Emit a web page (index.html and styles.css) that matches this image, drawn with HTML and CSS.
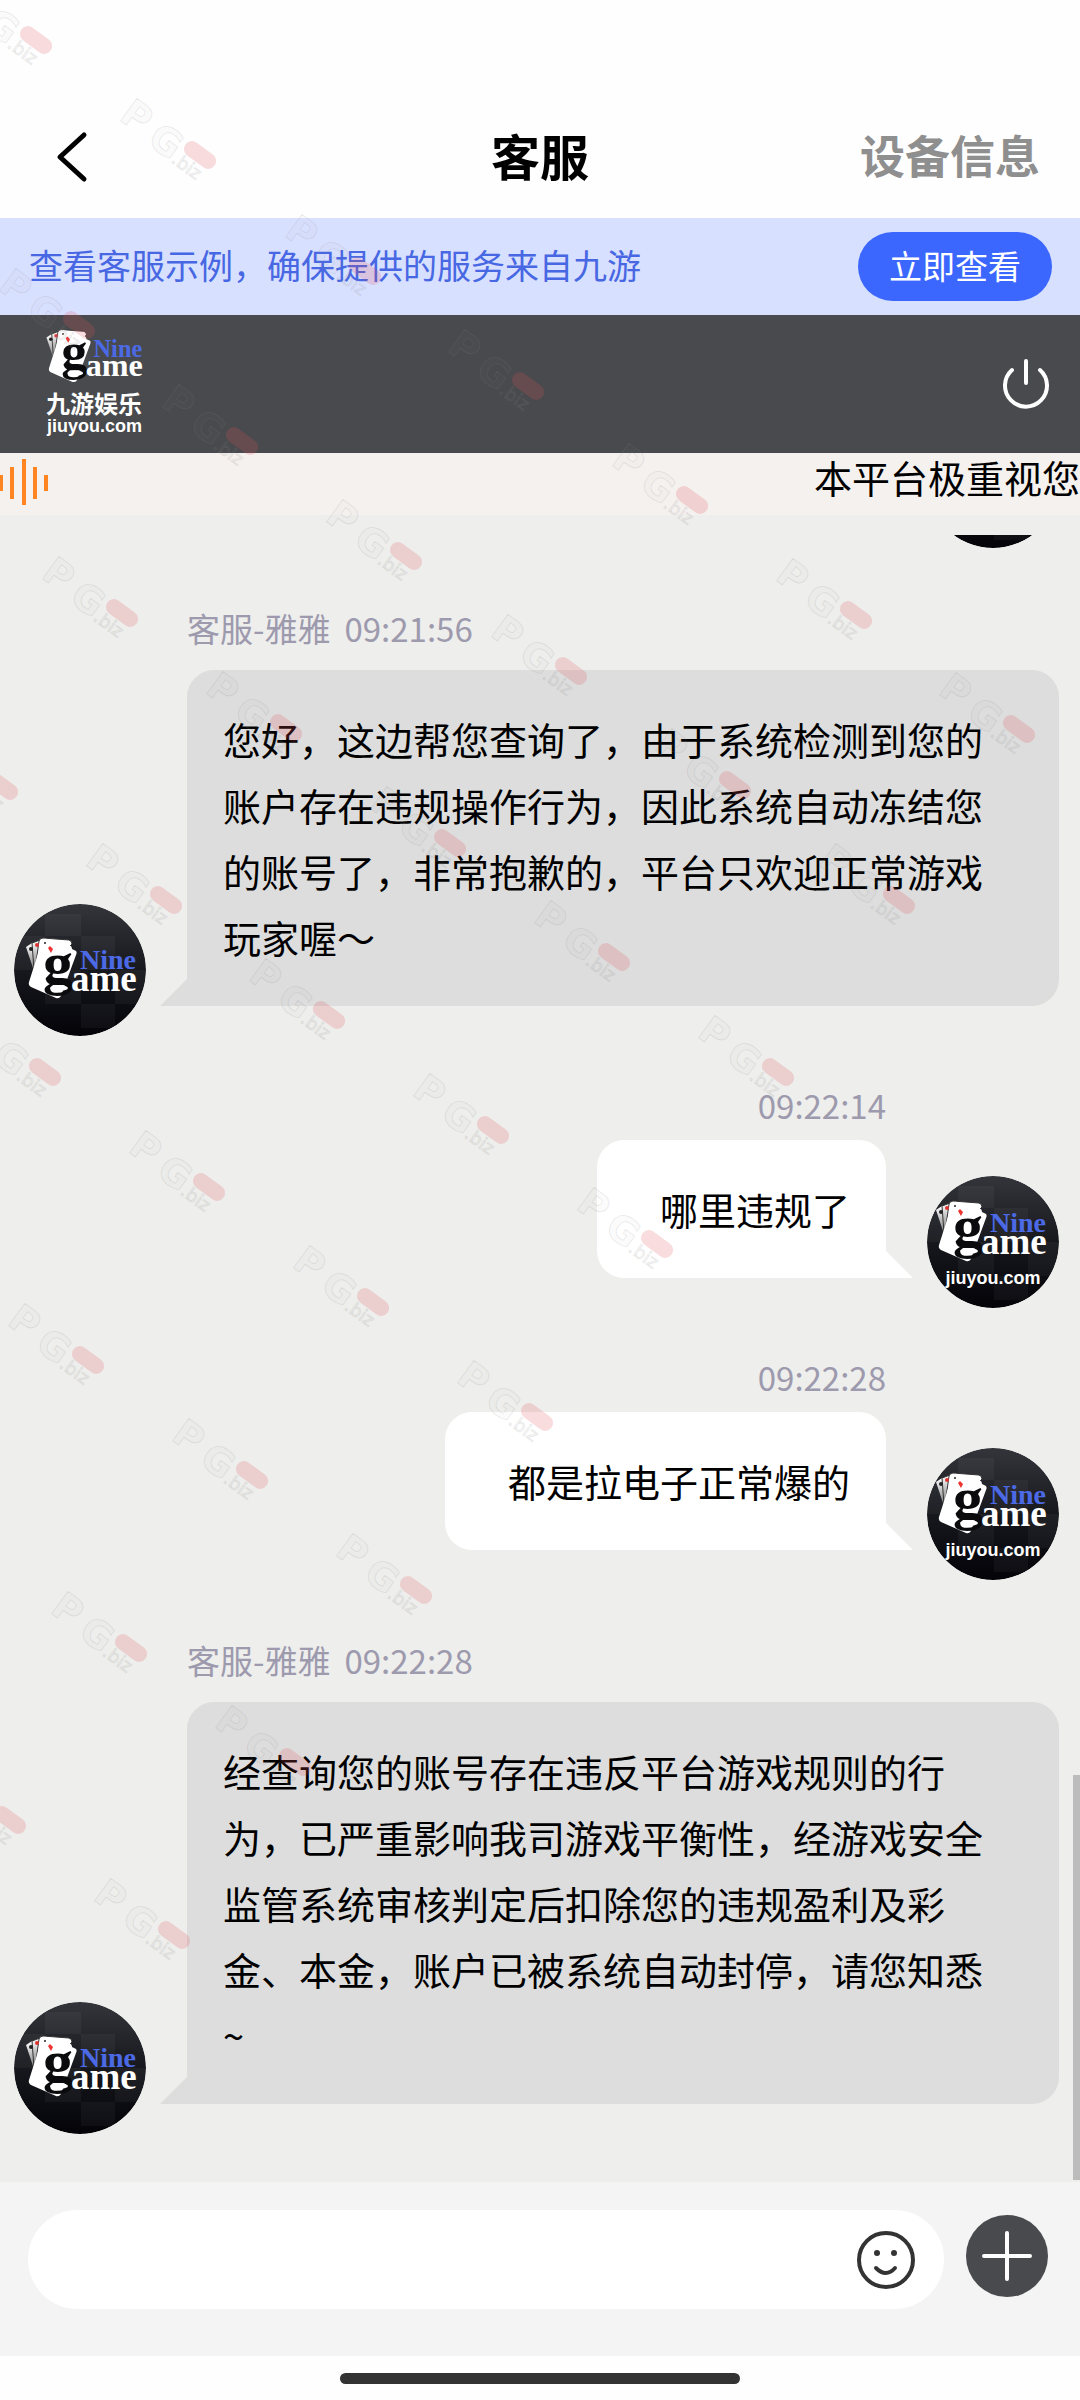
FILE: index.html
```html
<!DOCTYPE html>
<html lang="zh-CN">

<head>
    <meta charset="UTF-8">
    <meta name="viewport" content="width=device-width, initial-scale=1.0">
    <title>客服</title>
    <link rel="stylesheet" href="styles.css">
</head>

<body>
    <!-- Shared shapes -->
    <svg class="defs" width="0" height="0" aria-hidden="true">
        <defs>
            <linearGradient id="avatar-bg" x1="0" y1="0" x2="0" y2="1">
                <stop offset="0" stop-color="#34353b" />
                <stop offset="0.5" stop-color="#17181d" />
                <stop offset="1" stop-color="#030308" />
            </linearGradient>
            <linearGradient id="card-shade" x1="0" y1="0" x2="0" y2="1">
                <stop offset="0" stop-color="#fff" />
                <stop offset="1" stop-color="#777" />
            </linearGradient>
            <symbol id="brand" viewBox="0 0 132 132" overflow="visible">
                <path d="M12 43l6-4 6 22-4 6z" fill="url(#card-shade)" />
                <path d="M18 39l8-3 2 16-8 14z" fill="url(#card-shade)" stroke="#333" stroke-width="1" />
                <path d="M25 37q1-3 4-3l26 2q3 1 3 4l-28 28-9-2z" fill="#fff" stroke="#333" stroke-width="1" />
                <path d="M28 37q1-3 5-2l22 6q3 1 3 4l2 1q4 1 2 5L47 92q-2 3-5 2L17 83q-3-2-2-5z" fill="#fff" />
                <circle cx="17" cy="45" r="2" fill="#222" />
                <circle cx="23" cy="41" r="2" fill="#d33" />
                <circle cx="31" cy="39" r="1" fill="#222" />
                <path d="M34 44l2-2 3 3-2 4z" fill="#e33" />
                <text class="brand-g" x="29" y="79">g</text>
                <ellipse cx="45" cy="84" rx="9" ry="3" fill="#fff" />
                <text class="brand-nine" x="66" y="65">Nine</text>
                <text class="brand-ame" x="57" y="87">ame</text>
            </symbol>
            <symbol id="avatar-base" viewBox="0 0 132 132">
                <circle cx="66" cy="66" r="66" fill="url(#avatar-bg)" />
                <path d="M31 10h36v22H31zM67 32h34v34H67zM0 66h31V32H0zM31 66h36v34H31zM101 66h31v34h-31zM67 100h34v24H67z" fill="#fff" opacity="0.04" />
            </symbol>
            <symbol id="mark" overflow="visible">
                <g transform="rotate(36)">
                    <text class="mark-name" x="-88" y="19">P</text>
                    <text class="mark-name" x="-51" y="22">G</text>
                    <text class="mark-tld" x="-20" y="23">.biz</text>
                    <rect x="-18" y="-8" width="36" height="16" rx="8" fill="#e2505a" opacity="0.2" />
                </g>
            </symbol>
        </defs>
    </svg>

    <div class="app">
        <!-- Title bar -->
        <header class="title-bar">
            <button class="back" type="button" aria-label="返回">
                <svg width="34" height="54" viewBox="0 0 34 54">
                    <path d="M29 5L5 27l24 22" />
                </svg>
            </button>
            <h1>客服</h1>
            <a class="device-link" href="#">设备信息</a>
        </header>

        <!-- Notice -->
        <div class="notice">
            <p>查看客服示例，确保提供的服务来自九游</p>
            <button class="notice-button" type="button">立即查看</button>
        </div>

        <!-- Brand bar -->
        <div class="brand-bar">
            <svg class="logo" width="100" height="112" viewBox="0 0 100 112" role="img" aria-label="九游娱乐">
                <use href="#brand" x="-10" y="-28" width="115" height="115" />
                <text class="logo-name" x="0" y="85">九游娱乐</text>
                <text class="logo-site" x="1" y="104">jiuyou.com</text>
            </svg>
            <button class="power" type="button" aria-label="退出">
                <svg width="50" height="54" viewBox="0 0 50 54">
                    <path d="M11 13a21 21 0 1 0 28 0M25 4v22" />
                </svg>
            </button>
        </div>

        <!-- Announcement -->
        <div class="announce">
            <svg width="50" height="50" viewBox="0 0 50 50" aria-hidden="true">
                <path d="M1 18v16M12 10v32M24 2v46M35 10v32M46 18v16" />
            </svg>
            <div class="announce-text">本平台极重视您</div>
        </div>

        <!-- Messages -->
        <div class="chat-wrap">
            <main class="chat">
                <div class="message user">
                    <svg class="avatar" viewBox="0 0 132 132">
                        <use href="#avatar-base" />
                    </svg>
                </div>

                <div class="message staff">
                    <svg class="avatar" viewBox="0 0 132 132">
                        <use href="#avatar-base" />
                        <use href="#brand" width="132" height="132" />
                    </svg>
                    <div class="content">
                        <div class="meta"><span>客服-雅雅</span><time>09:21:56</time></div>
                        <div class="bubble">您好，这边帮您查询了，由于系统检测到您的账户存在违规操作行为，因此系统自动冻结您的账号了，非常抱歉的，平台只欢迎正常游戏玩家喔～</div>
                    </div>
                </div>

                <div class="message user">
                    <div class="content">
                        <div class="meta"><time>09:22:14</time></div>
                        <div class="bubble">哪里违规了</div>
                    </div>
                    <svg class="avatar" viewBox="0 0 132 132">
                        <use href="#avatar-base" />
                        <use href="#brand" x="-3" y="-9" width="132" height="132" />
                        <text class="avatar-site" x="66" y="108">jiuyou.com</text>
                    </svg>
                </div>

                <div class="message user">
                    <div class="content">
                        <div class="meta"><time>09:22:28</time></div>
                        <div class="bubble">都是拉电子正常爆的</div>
                    </div>
                    <svg class="avatar" viewBox="0 0 132 132">
                        <use href="#avatar-base" />
                        <use href="#brand" x="-3" y="-9" width="132" height="132" />
                        <text class="avatar-site" x="66" y="108">jiuyou.com</text>
                    </svg>
                </div>

                <div class="message staff">
                    <svg class="avatar" viewBox="0 0 132 132">
                        <use href="#avatar-base" />
                        <use href="#brand" width="132" height="132" />
                    </svg>
                    <div class="content">
                        <div class="meta"><span>客服-雅雅</span><time>09:22:28</time></div>
                        <div class="bubble">经查询您的账号存在违反平台游戏规则的行为，已严重影响我司游戏平衡性，经游戏安全监管系统审核判定后扣除您的违规盈利及彩金、本金，账户已被系统自动封停，请您知悉~</div>
                    </div>
                </div>
            </main>
            <div class="scroll-thumb"></div>
        </div>

        <!-- Composer -->
        <form class="composer">
            <div class="field">
                <input type="text" aria-label="输入消息">
                <button class="emoji" type="button" aria-label="表情">
                    <svg width="58" height="58" viewBox="0 0 58 58">
                        <circle class="line" cx="29" cy="29" r="27" />
                        <circle cx="20" cy="22" r="3" />
                        <circle cx="37" cy="22" r="3" />
                        <path class="line" d="M19 37q10 10 19 0" />
                    </svg>
                </button>
            </div>
            <button class="add" type="button" aria-label="更多">
                <svg width="54" height="54" viewBox="0 0 54 54">
                    <path d="M27 4v46M4 27h46" />
                </svg>
            </button>
        </form>

        <div class="home-area">
            <div class="home-bar"></div>
        </div>

        <!-- Watermark -->
        <svg class="watermark" aria-hidden="true">
            <use href="#mark" x="36" y="40" />
            <use href="#mark" x="200" y="155" />
            <use href="#mark" x="365" y="271" />
            <use href="#mark" x="528" y="386" />
            <use href="#mark" x="692" y="500" />
            <use href="#mark" x="856" y="615" />
            <use href="#mark" x="1019" y="729" />
            <use href="#mark" x="79" y="325" />
            <use href="#mark" x="242" y="441" />
            <use href="#mark" x="406" y="556" />
            <use href="#mark" x="571" y="671" />
            <use href="#mark" x="735" y="785" />
            <use href="#mark" x="899" y="900" />
            <use href="#mark" x="122" y="613" />
            <use href="#mark" x="286" y="728" />
            <use href="#mark" x="450" y="843" />
            <use href="#mark" x="614" y="957" />
            <use href="#mark" x="778" y="1072" />
            <use href="#mark" x="2" y="786" />
            <use href="#mark" x="166" y="900" />
            <use href="#mark" x="329" y="1015" />
            <use href="#mark" x="493" y="1130" />
            <use href="#mark" x="657" y="1244" />
            <use href="#mark" x="45" y="1072" />
            <use href="#mark" x="209" y="1187" />
            <use href="#mark" x="373" y="1302" />
            <use href="#mark" x="537" y="1417" />
            <use href="#mark" x="88" y="1360" />
            <use href="#mark" x="252" y="1475" />
            <use href="#mark" x="416" y="1590" />
            <use href="#mark" x="131" y="1648" />
            <use href="#mark" x="295" y="1762" />
            <use href="#mark" x="10" y="1820" />
            <use href="#mark" x="174" y="1935" />
        </svg>
    </div>
</body>

</html>
```
FILE: styles.css
```css
* {
    box-sizing: border-box;
}

body {
    margin: 0;
    background-color: #fefefe;
    color: #000;
    font-family: "Noto Sans CJK SC", sans-serif;
}

button {
    border: none;
    padding: 0;
    background: none;
    font-family: inherit;
    cursor: pointer;
}

svg {
    display: block;
}

.defs {
    position: absolute;
}

.app {
    position: relative;
    display: flex;
    flex-direction: column;
    height: 100vh;
    overflow: hidden;
}

/* Title bar */
.title-bar {
    display: grid;
    grid-template-columns: 1fr auto 1fr;
    align-items: center;
    height: 218px;
    padding: 92px 40px 0;
    flex-shrink: 0;
}

.title-bar h1 {
    margin: 0;
    font-size: 49px;
    line-height: 72px;
    font-weight: 700;
}

.back {
    justify-self: start;
    padding: 4px 15px 0;
}

.back path {
    fill: none;
    stroke: #000;
    stroke-width: 5;
    stroke-linecap: round;
    stroke-linejoin: round;
}

.device-link {
    justify-self: end;
    color: #8f8f8f;
    font-size: 45px;
    line-height: 72px;
    font-weight: 700;
    text-decoration: none;
}

/* Notice */
.notice {
    display: flex;
    align-items: center;
    justify-content: space-between;
    height: 97px;
    padding: 0 28px 0 29px;
    background-color: #d8e0ff;
    flex-shrink: 0;
}

.notice p {
    margin: 0;
    padding-bottom: 4px;
    color: #4767e3;
    font-size: 34px;
}

.notice-button {
    width: 194px;
    height: 69px;
    padding-bottom: 4px;
    border-radius: 35px;
    background-color: #3c67ff;
    color: #fff;
    font-size: 33px;
}

/* Brand bar */
.brand-bar {
    display: flex;
    align-items: center;
    justify-content: space-between;
    height: 138px;
    padding: 0 29px 0 46px;
    background-color: #484a4d;
    flex-shrink: 0;
}

.brand-g,
.brand-nine,
.brand-ame {
    font-family: "Liberation Serif", serif;
    font-weight: 700;
}

.brand-g {
    font-size: 60px;
    fill: #0b0b0e;
}

.brand-nine {
    font-size: 28px;
    fill: #4c6ae6;
}

.brand-ame {
    font-size: 37px;
    fill: #fff;
}

.logo-name {
    font-size: 24px;
    font-weight: 700;
    fill: #fff;
}

.logo-site,
.avatar-site {
    font-family: "Liberation Sans", sans-serif;
    font-size: 18px;
    font-weight: 700;
    fill: #fff;
}

.avatar-site {
    text-anchor: middle;
}

.power path {
    fill: none;
    stroke: #fff;
    stroke-width: 4;
    stroke-linecap: round;
}

/* Announcement */
.announce {
    display: flex;
    justify-content: space-between;
    height: 62px;
    padding-top: 4px;
    background-color: #f5f1ef;
    flex-shrink: 0;
}

.announce path {
    stroke: #ff8422;
    stroke-width: 4;
}

.announce-text {
    font-size: 38px;
    line-height: 40px;
    white-space: nowrap;
}

/* Messages */
.chat-wrap {
    position: relative;
    display: flex;
    flex: 1;
    min-height: 0;
    padding-top: 20px;
    background-color: #eeeeec;
}

.chat {
    display: flex;
    flex-direction: column;
    justify-content: flex-end;
    flex: 1;
    min-width: 0;
    padding: 0 21px 48px 14px;
    overflow: hidden;
}

.message {
    display: flex;
    align-items: flex-end;
    flex-shrink: 0;
}

.avatar {
    width: 132px;
    height: 132px;
    border-radius: 50%;
    flex-shrink: 0;
    overflow: hidden;
}

.content {
    min-width: 0;
    padding-bottom: 30px;
}

.message.staff {
    gap: 41px;
    margin-top: 58px;
}

.message.staff .content {
    flex: 1;
}

.message.user {
    justify-content: flex-end;
    gap: 41px;
    margin-top: 47px;
}

.meta {
    display: flex;
    gap: 14px;
    margin-bottom: 13px;
    color: #9d9aae;
    font-size: 33px;
    line-height: 44px;
}

.message.staff .meta {
    margin-bottom: 20px;
}

.message.user .meta {
    justify-content: flex-end;
}

.bubble {
    position: relative;
    padding: 36px 64px 36px 36px;
    border-radius: 27px;
    font-size: 38px;
    line-height: 66px;
}

.message.staff .bubble {
    background-color: #ddd;
    border-bottom-left-radius: 0;
}

.message.user .bubble {
    padding: 36px 36px 36px 63px;
    background-color: #fff;
    border-bottom-right-radius: 0;
}

.bubble::after {
    content: "";
    position: absolute;
    bottom: 0;
    width: 27px;
    height: 27px;
}

.message.staff .bubble::after {
    right: 100%;
    background-color: #ddd;
    clip-path: polygon(100% 0, 100% 100%, 0 100%);
}

.message.user .bubble::after {
    left: 100%;
    background-color: #fff;
    clip-path: polygon(0 0, 100% 100%, 0 100%);
}

.scroll-thumb {
    position: absolute;
    right: 0;
    bottom: 2px;
    width: 7px;
    height: 405px;
    background-color: #bcbcbc;
}

/* Composer */
.composer {
    display: flex;
    align-items: flex-start;
    gap: 22px;
    height: 174px;
    padding: 28px 32px 0 28px;
    background-color: #f4f4f4;
    flex-shrink: 0;
}

.field {
    display: flex;
    align-items: center;
    flex: 1;
    height: 99px;
    padding: 0 29px 0 40px;
    border-radius: 50px;
    background-color: #fff;
}

.field input {
    flex: 1;
    min-width: 0;
    border: none;
    outline: none;
    background: none;
    font-family: inherit;
    font-size: 38px;
}

.emoji svg {
    fill: #333;
}

.emoji .line {
    fill: none;
    stroke: #333;
    stroke-width: 4;
    stroke-linecap: round;
}

.add {
    display: flex;
    align-items: center;
    justify-content: center;
    width: 82px;
    height: 82px;
    margin-top: 5px;
    border-radius: 50%;
    background-color: #484a4d;
}

.add path {
    stroke: #fff;
    stroke-width: 4;
    stroke-linecap: round;
}

.home-area {
    display: flex;
    justify-content: center;
    height: 44px;
    padding-top: 17px;
    flex-shrink: 0;
}

.home-bar {
    width: 37%;
    height: 11px;
    border-radius: 6px;
    background-color: #333;
}

/* Watermark */
.watermark {
    position: absolute;
    top: 0;
    left: 0;
    width: 100%;
    height: 100%;
    pointer-events: none;
}

.mark-name,
.mark-tld {
    font-family: "DejaVu Sans", sans-serif;
    font-weight: 700;
    fill: #999;
    fill-opacity: 0.05;
    stroke: #888;
    stroke-opacity: 0.16;
    stroke-width: 1;
}

.mark-name {
    font-size: 38px;
}

.mark-tld {
    font-size: 18px;
    font-weight: 400;
}
```
